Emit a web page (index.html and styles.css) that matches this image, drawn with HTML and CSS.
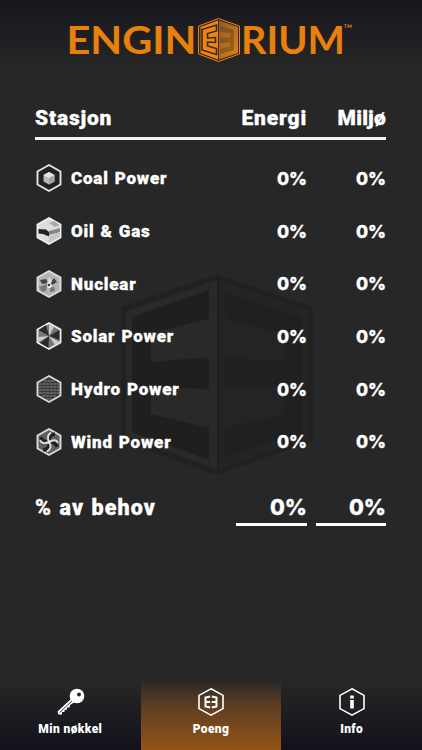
FILE: index.html
```html
<!DOCTYPE html>
<html lang="no">
<head>
    <meta charset="UTF-8">
    <meta name="viewport" content="width=device-width, initial-scale=1.0">
    <title>Enginerium</title>
    <link rel="stylesheet" href="styles.css">
</head>
<body>
    <header class="header">
        <svg class="logo" width="290" height="50" viewBox="65 15 290 50">
            <defs>
                <linearGradient id="cubeSide" x1="0" y1="0" x2="1" y2="1">
                    <stop offset="0" stop-color="#8c5a25"/>
                    <stop offset="1" stop-color="#e08218"/>
                </linearGradient>
            </defs>
            <text class="logo-text" x="66.500" y="53.5" textLength="130" lengthAdjust="spacingAndGlyphs">ENGIN</text>
            <path d="M218.500 18.500L239.500 26V54L218.500 61.500L198.500 54V26Z" fill="#3a2815" stroke="#e8850f" stroke-width="1"/>
            <path d="M218 20.500V59.500L200.500 53V27Z" fill="#ec8512"/>
            <path d="M219 20.500L238 27V53L219 59.500Z" fill="url(#cubeSide)"/>
            <path d="M216.500 25V31L207.500 33.500V38L215.500 37.500V42.500L207.500 42V46L216.500 48.500V54.500L202 50V29.500Z" fill="#ec8512" stroke="#3a2815" stroke-width="1.600"/>
            <path d="M220 26L234 30V50L220 54V49L230 46.500V42.500L220 43V37.500L230 37.500V33.500L220 31Z" fill="#5d4022" opacity=".45"/>
            <text class="logo-text" x="241" y="53.5" textLength="104" lengthAdjust="spacingAndGlyphs">RIUM</text>
            <text class="logo-tm" x="343.500" y="33">™</text>
        </svg>
    </header>

    <main class="score">
        <svg class="watermark" width="192" height="202" viewBox="0 0 192 202">
            <path d="M96 0L192 33V167L96 201L0 167V33Z" fill="#212121"/>
            <path d="M96 6L187 37V163L96 195L5 163V37Z" fill="#292929"/>
            <path d="M88 16L11 43V158L88 186V154L30 140V113L88 115V83L30 88V59L88 45Z" fill="#1f1f1f"/>
            <path d="M97 6L187 37V163L97 195Z" fill="#242424"/>
            <path d="M104 18L181 43V158L104 184V154L162 140V113L104 115V83L162 88V59L104 45Z" fill="#202020"/>
            <path d="M97 3V198" stroke="#1e1e1e" stroke-width="2"/>
        </svg>

        <div class="row head">
            <span>Stasjon</span>
            <span class="value">Energi</span>
            <span class="value miljo">Miljø</span>
        </div>

        <div class="stations">
            <div class="row">
                <div class="station">
                    <svg class="hex" viewBox="0 0 28 30">
                        <path d="M14 2L25.500 8.500V21.500L14 28L2.500 21.500V8.500Z" fill="#222" stroke="#e4e4e4" stroke-width="1.900"/>
                        <path d="M14 9L19.500 12V18.500L14 21.500L8.500 18.500V12Z" fill="#bbb"/>
                        <path d="M14 9L19.500 12L14 15L8.500 12Z" fill="#e4e4e4"/>
                        <path d="M14 15L19.500 12V18.500L14 21.500Z" fill="#a4a4a4"/>
                    </svg>
                    <span>Coal Power</span>
                </div>
                <span class="value number">0%</span>
                <span class="value number">0%</span>
            </div>
            <div class="row">
                <div class="station">
                    <svg class="hex" viewBox="0 0 28 30">
                        <path d="M14 2L25.500 8.500V21.500L14 28L2.500 21.500V8.500Z" fill="#ddd" stroke="#f0f0f0" stroke-width="1.900"/>
                        <path d="M14 7L19 5L25 9L20 11Z" fill="#aaa"/>
                        <path d="M3.500 13L11 13.500L14 16V20.500L8 18L3.500 17.500Z" fill="#222"/>
                        <path d="M14 15L25 12V16L14 19Z" fill="#888"/>
                        <path d="M14 20L25 16V21L14 27Z" fill="#c8c8c8"/>
                    </svg>
                    <span>Oil &amp; Gas</span>
                </div>
                <span class="value number">0%</span>
                <span class="value number">0%</span>
            </div>
            <div class="row">
                <div class="station">
                    <svg class="hex" viewBox="0 0 28 30">
                        <path d="M14 2L25.500 8.500V21.500L14 28L2.500 21.500V8.500Z" fill="#b4b4b4" stroke="#ddd" stroke-width="1.900"/>
                        <path d="M5 11L11 10L13 14L7 15ZM16 13L19 9L22 13L17 16Z" fill="#444"/>
                        <path d="M4 18L12 15L11 22L7 23ZM15 18L19 18L20 22L15 23Z" fill="#777"/>
                        <circle cx="14.500" cy="17" r="2.200" fill="#eee"/>
                        <circle cx="14" cy="16" r="1.200" fill="#333"/>
                        <path d="M12 15L14 8L17 12L15 15Z" fill="#ddd"/>
                    </svg>
                    <span>Nuclear</span>
                </div>
                <span class="value number">0%</span>
                <span class="value number">0%</span>
            </div>
            <div class="row">
                <div class="station">
                    <svg class="hex" viewBox="0 0 28 30">
                        <path d="M14 2L25.500 8.500V21.500L14 28L2.500 21.500V8.500Z" fill="#777" stroke="#eee" stroke-width="1.900"/>
                        <path d="M14 15L3.500 9L11 4ZM14 15L24.500 9V19ZM14 15L13.500 27L5 22Z" fill="#2a2a2a"/>
                        <path d="M14 15L14 3L19 6ZM14 15L3.500 21V16ZM14 15L24.500 21L20 24Z" fill="#ccc"/>
                    </svg>
                    <span>Solar Power</span>
                </div>
                <span class="value number">0%</span>
                <span class="value number">0%</span>
            </div>
            <div class="row">
                <div class="station">
                    <svg class="hex" viewBox="0 0 28 30">
                        <path d="M14 2L25.500 8.500V21.500L14 28L2.500 21.500V8.500Z" fill="#383838" stroke="#d8d8d8" stroke-width="1.900"/>
                        <path d="M9 7H19M4 10H24M4 13H24M4 16H24M4 19H24M7 22H21M11 25H17" stroke="#888" stroke-width="1" stroke-dasharray="3 .6"/>
                    </svg>
                    <span>Hydro Power</span>
                </div>
                <span class="value number">0%</span>
                <span class="value number">0%</span>
            </div>
            <div class="row">
                <div class="station">
                    <svg class="hex" viewBox="0 0 28 30">
                        <path d="M14 2L25.500 8.500V21.500L14 28L2.500 21.500V8.500Z" fill="#606060" stroke="#ddd" stroke-width="1.900"/>
                        <path d="M14 15Q7 15 6 10M14 15Q13 8 20 7M14 15Q21 15 22 20M14 15Q15 22 8 23" fill="none" stroke="#222" stroke-width="3.500"/>
                        <path d="M14 15Q7 18 5 13M14 15Q11 9 16 5.500M14 15Q21 11 23 16M14 15Q18 21 12 24.500" fill="none" stroke="#ddd" stroke-width="2"/>
                        <circle cx="14" cy="15" r="1.500" fill="#eee"/>
                    </svg>
                    <span>Wind Power</span>
                </div>
                <span class="value number">0%</span>
                <span class="value number">0%</span>
            </div>
        </div>

        <div class="row total">
            <span>% av behov</span>
            <span class="value number sum">0%</span>
            <span class="value number sum">0%</span>
        </div>
    </main>

    <nav class="tabs">
        <a class="tab">
            <svg width="30" height="30" viewBox="0 0 30 30">
                <path d="M17 11L2.500 24.500L3.500 27.500H7V25H9.500V23L12 22.500V20.500H14.500L15 18L20 15Z" fill="#fff"/>
                <circle cx="22" cy="9" r="7.300" fill="#fff"/>
                <circle cx="24" cy="7.500" r="1.900" fill="#262626"/>
                <path d="M4.500 25.500L17 14" stroke="#262626" stroke-width=".9"/>
            </svg>
            <span>Min nøkkel</span>
        </a>
        <a class="tab active">
            <svg width="30" height="30" viewBox="0 0 30 30" fill="none" stroke="#fff">
                <path d="M15 1.800L27 8.400V21.600L15 28.200L3 21.600V8.400Z" stroke-width="1.600"/>
                <path d="M14.200 9.500L9.500 10.500V19.500L14.200 20.500M9.500 15H14.200M15.800 9.500L20.500 10.500V19.500L15.800 20.500M20.500 15H15.800" stroke-width="2"/>
            </svg>
            <span>Poeng</span>
        </a>
        <a class="tab">
            <svg width="30" height="30" viewBox="0 0 30 30">
                <path d="M15 1.800L27 8.400V21.600L15 28.200L3 21.600V8.400Z" fill="none" stroke="#fff" stroke-width="1.600"/>
                <path d="M13.200 8.500H16.800V11.500H13.200ZM13.200 13H16.800V21.500H13.200Z" fill="#fff"/>
            </svg>
            <span>Info</span>
        </a>
    </nav>
</body>
</html>
```

FILE: styles.css
```css
* {
    margin: 0;
    padding: 0;
    box-sizing: border-box;
}

body {
    font-family: Roboto, sans-serif;
    font-weight: 900;
    color: #fff;
    background-color: #272727;
    width: 100%;
    height: 100vh;
    display: flex;
    flex-direction: column;
    overflow: hidden;
}

.header {
    height: 100px;
    padding: 15px 0 0 65px;
    background: linear-gradient(to bottom, #17161e, #272727 70px);
}

.logo {
    display: block;
}

.logo-text {
    font-family: Lato, sans-serif;
    font-size: 38px;
    font-weight: 700;
    fill: #e8800c;
}

.logo-tm {
    font-family: Lato, sans-serif;
    font-size: 12px;
    font-weight: 400;
    fill: #e8800c;
}

.score {
    position: relative;
    flex: 1;
    padding: 0 36px 0 35px;
    -webkit-text-stroke: 0.3px #fff;
}

/* faded cube behind the table */
.watermark {
    position: absolute;
    left: 121px;
    top: 174px;
    z-index: -1;
}

.row {
    display: grid;
    grid-template-columns: 1fr 71px 70px;
    column-gap: 9px;
    align-items: center;
}

.value {
    text-align: right;
}

.number {
    font-family: Inter, sans-serif;
    font-weight: 800;
    font-size: 17.5px;
    letter-spacing: 0;
}

.head {
    height: 40px;
    padding-bottom: 2px;
    font-size: 21px;
    letter-spacing: 0.8px;
    border-bottom: 3px solid #f4f4f4;
}

.miljo {
    letter-spacing: 0.2px;
}

.stations {
    padding-top: 12px;
    font-size: 17px;
    letter-spacing: 0.8px;
}

.stations .row {
    height: 52.7px;
}

.station {
    display: flex;
    align-items: center;
    gap: 8px;
    word-spacing: 1px;
}

.hex {
    width: 28px;
    height: 30px;
}

.total {
    margin-top: 21px;
    font-size: 21.5px;
    letter-spacing: 1.1px;
    word-spacing: 1px;
}

.sum {
    height: 37px;
    line-height: 36px;
    font-size: 21.5px;
    border-bottom: 3px solid #fff;
}

.tabs {
    height: 70px;
    display: flex;
}

.tab {
    flex: 1;
    display: flex;
    flex-direction: column;
    align-items: center;
    padding-top: 7px;
    font-size: 12px;
    letter-spacing: 0.4px;
    background: linear-gradient(to bottom, #272727, #13111b);
}

.tab span {
    margin-top: 5px;
}

.tab.active {
    background: linear-gradient(to bottom, #272727, #5c3d22 35%, #945419);
}
```
